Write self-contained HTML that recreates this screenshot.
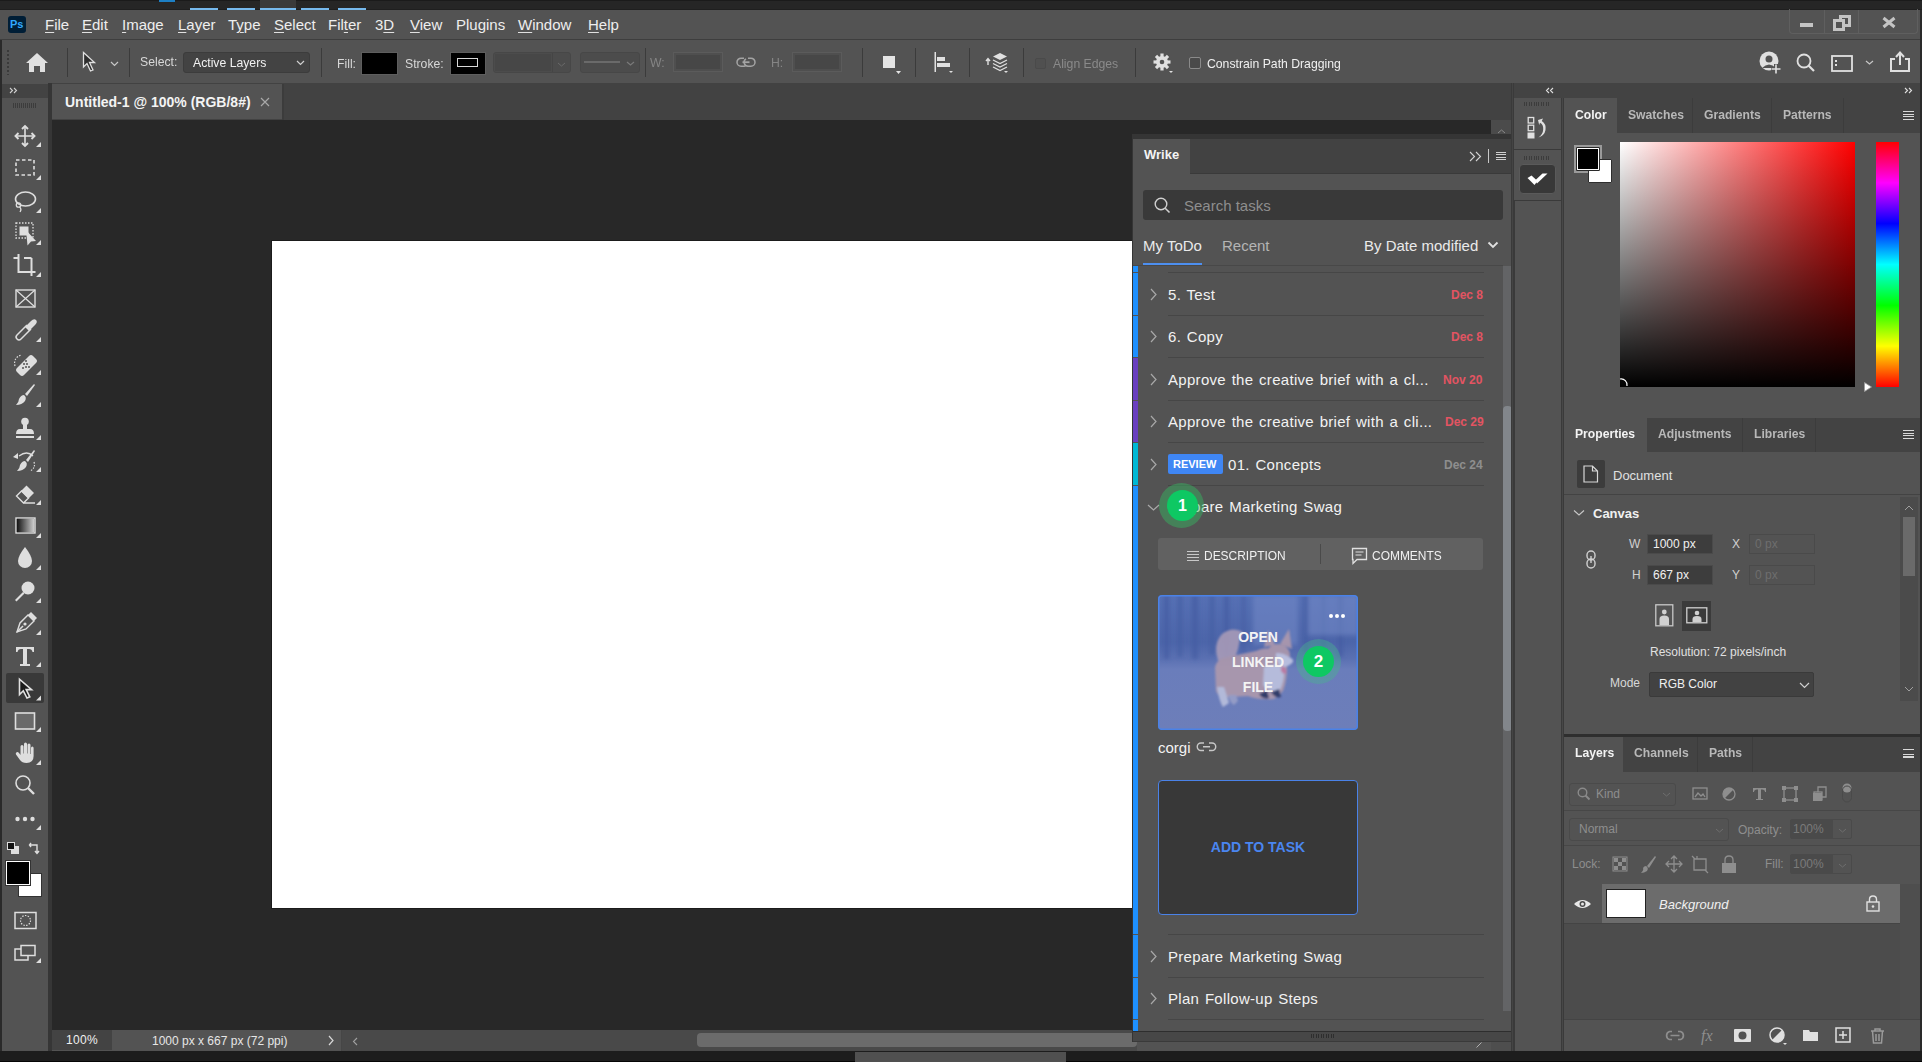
<!DOCTYPE html>
<html><head><meta charset="utf-8">
<style>
*{box-sizing:border-box;margin:0;padding:0}
html,body{width:1922px;height:1062px;overflow:hidden;background:#282828;font-family:"Liberation Sans",sans-serif;color:#e8e8e8}
.a{position:absolute}
.t{position:absolute;white-space:nowrap;line-height:1}
svg{position:absolute;overflow:visible}
.mi{position:absolute;top:17px;font-size:15px;color:#eeeeee;white-space:nowrap;line-height:1}
.mi u{text-decoration:underline;text-decoration-thickness:1px;text-underline-offset:2px;text-decoration-color:#e0e0e0}
.sep{position:absolute;width:1px;background:#3b3b3b}
.ob{position:absolute;font-size:13px;line-height:1;white-space:nowrap;transform:scaleX(0.94);transform-origin:0 0}
.inp{position:absolute;background:#474747;border:1px solid #5b5b5b;box-shadow:inset 0 0 0 2px #4f4f4f}
</style></head><body>
<!-- top strip -->
<div class="a" style="left:0;top:0;width:1922px;height:10px;background:#262626;border-top:1px solid #1b1b1b;border-bottom:1px solid #1f1f1f"></div>
<div class="a" style="left:190px;top:8px;width:28px;height:2px;background:#76b9ed"></div>
<div class="a" style="left:227px;top:8px;width:28px;height:2px;background:#76b9ed"></div>
<div class="a" style="left:260px;top:0;width:36px;height:8px;background:#3a3a3a"></div>
<div class="a" style="left:260px;top:8px;width:36px;height:2px;background:#76b9ed"></div>
<div class="a" style="left:301px;top:8px;width:28px;height:2px;background:#76b9ed"></div>
<div class="a" style="left:338px;top:8px;width:28px;height:2px;background:#76b9ed"></div>
<div class="a" style="left:159px;top:0;width:16px;height:2px;background:#1d7fc4"></div>
<!-- menu bar -->
<div class="a" style="left:0;top:10px;width:1922px;height:30px;background:#535353;border-bottom:1px solid #3e3e3e"></div>
<div class="a" style="left:8px;top:16px;width:18px;height:17px;background:#001e36;border-radius:3px"></div>
<div class="t" style="left:10px;top:19px;font-size:11px;font-weight:bold;color:#31a8ff">Ps</div>
<div class="mi" style="left:45px"><u>F</u>ile</div>
<div class="mi" style="left:82px"><u>E</u>dit</div>
<div class="mi" style="left:122px"><u>I</u>mage</div>
<div class="mi" style="left:178px"><u>L</u>ayer</div>
<div class="mi" style="left:228px">T<u>y</u>pe</div>
<div class="mi" style="left:274px"><u>S</u>elect</div>
<div class="mi" style="left:328px">Fil<u>t</u>er</div>
<div class="mi" style="left:375px">3<u>D</u></div>
<div class="mi" style="left:410px"><u>V</u>iew</div>
<div class="mi" style="left:456px">Plugins</div>
<div class="mi" style="left:518px"><u>W</u>indow</div>
<div class="mi" style="left:588px"><u>H</u>elp</div>
<!-- window controls -->
<div class="a" style="left:1789px;top:9px;width:129px;height:25px;border:1px solid #5f5f5f;border-top:none;border-radius:0 0 4px 4px"></div>
<div class="a" style="left:1824px;top:10px;width:1px;height:23px;background:#5f5f5f"></div>
<div class="a" style="left:1858px;top:10px;width:1px;height:23px;background:#5f5f5f"></div>
<div class="a" style="left:1800px;top:23px;width:13px;height:4px;background:#c4c4c4"></div>
<svg style="left:1833px;top:15px" width="19" height="16"><rect x="7.5" y="1.5" width="9" height="9" fill="none" stroke="#c4c4c4" stroke-width="3"/><rect x="1.5" y="5.5" width="9" height="9" fill="#535353" stroke="#c4c4c4" stroke-width="3"/></svg>
<svg style="left:1882px;top:17px" width="14" height="11"><path d="M1.5 1L12.5 10M12.5 1L1.5 10" stroke="#c4c4c4" stroke-width="3"/></svg>
<!-- options bar -->
<div class="a" style="left:0;top:40px;width:1922px;height:43px;background:#535353"></div>
<div class="a" style="left:0;top:40px;width:2px;height:1022px;background:#2a2a2a"></div>
<div class="a" style="left:7px;top:50px;width:2px;height:25px;background:repeating-linear-gradient(#3a3a3a 0 2px,transparent 2px 4px)"></div>
<svg style="left:26px;top:53px" width="22" height="19"><path d="M11 0L22 10H19V19H14V13H8V19H3V10H0Z" fill="#e0e0e0"/></svg>
<div class="sep" style="left:67px;top:48px;height:29px"></div>
<svg style="left:82px;top:51px" width="14" height="22"><path d="M1.5 1.5V16L5 12.5L8.5 20L11 19L7.5 11.5H12.5Z" fill="#2e2e2e" stroke="#e0e0e0" stroke-width="1.3"/></svg>
<svg style="left:110px;top:61px" width="9" height="6"><path d="M1 1L4.5 4.5L8 1" fill="none" stroke="#c8c8c8" stroke-width="1.2"/></svg>
<div class="sep" style="left:129px;top:48px;height:29px"></div>
<div class="ob" style="left:140px;top:55px;font-size:13px;color:#d8d8d8">Select:</div>
<div class="a" style="left:183px;top:52px;width:127px;height:21px;background:#434343;border:1px solid #3c3c3c;border-radius:3px"></div>
<div class="ob" style="left:193px;top:56px;font-size:13px;color:#f2f2f2">Active Layers</div>
<svg style="left:296px;top:60px" width="9" height="6"><path d="M1 1L4.5 4.5L8 1" fill="none" stroke="#d0d0d0" stroke-width="1.2"/></svg>
<div class="sep" style="left:321px;top:48px;height:29px"></div>
<div class="ob" style="left:337px;top:57px;color:#d8d8d8">Fill:</div>
<div class="a" style="left:361px;top:52px;width:37px;height:23px;background:#000;border:1px solid #5e5e5e"></div>
<div class="ob" style="left:405px;top:57px;color:#d8d8d8">Stroke:</div>
<div class="a" style="left:450px;top:52px;width:36px;height:23px;background:#000;border:1px solid #5e5e5e"></div>
<div class="a" style="left:457px;top:58px;width:21px;height:9px;border:1.5px solid #d8d8d8"></div>
<div class="a" style="left:493px;top:52px;width:78px;height:21px;background:#4c4c4c;border:1px solid #474747;border-radius:3px"></div>
<div class="a" style="left:495px;top:54px;width:56px;height:17px;background:#474747"></div>
<div class="a" style="left:552px;top:53px;width:1px;height:19px;background:#454545"></div>
<svg style="left:557px;top:62px" width="9" height="5"><path d="M1 1L4.5 4L8 1" fill="none" stroke="#6a6a6a" stroke-width="1"/></svg>
<div class="a" style="left:580px;top:52px;width:60px;height:21px;background:#4c4c4c;border:1px solid #474747;border-radius:3px"></div>
<div class="a" style="left:584px;top:61px;width:36px;height:2px;background:#6a6a6a"></div>
<svg style="left:626px;top:61px" width="9" height="5"><path d="M1 1L4.5 4L8 1" fill="none" stroke="#7a7a7a" stroke-width="1.2"/></svg>
<div class="sep" style="left:645px;top:48px;height:29px"></div>
<div class="ob" style="left:650px;top:56px;color:#858585">W:</div>
<div class="inp" style="left:673px;top:52px;width:50px;height:20px"></div>
<svg style="left:736px;top:57px" width="20" height="11"><path d="M8 1.2H5A4 4 0 0 0 5 9.2H8A4 4 0 0 0 10 8.6M12 1.2H15A4 4 0 0 1 15 9.2H12A4 4 0 0 1 10 1.8" fill="none" stroke="#a4a4a4" stroke-width="1.5"/><path d="M6.5 5.2H13.5" stroke="#a4a4a4" stroke-width="1.8"/></svg>
<div class="ob" style="left:771px;top:56px;color:#858585">H:</div>
<div class="inp" style="left:792px;top:52px;width:50px;height:20px"></div>
<div class="sep" style="left:862px;top:48px;height:29px"></div>
<div class="a" style="left:883px;top:56px;width:12px;height:12px;background:#e4e4e4"></div>
<svg style="left:896px;top:71px" width="5" height="3"><path d="M0 0H5L2.5 3Z" fill="#e4e4e4"/></svg>
<div class="sep" style="left:915px;top:48px;height:29px"></div>
<svg style="left:934px;top:52px" width="20" height="22"><rect x="0.5" y="0" width="1.5" height="20" fill="#e0e0e0"/><rect x="3" y="5" width="8" height="4" fill="#e0e0e0"/><rect x="3" y="11" width="13" height="4" fill="#e0e0e0"/><path d="M15 19H19L17 21Z" fill="#e0e0e0"/></svg>
<div class="sep" style="left:969px;top:48px;height:29px"></div>
<svg style="left:984px;top:52px" width="26" height="22"><path d="M4 13V7M2 9L4 6.5L6 9" fill="none" stroke="#e0e0e0" stroke-width="1.4"/><path d="M16 1L23 4.5L16 8L9 4.5Z" fill="#e0e0e0"/><path d="M9 8L16 11.5L23 8M9 11.5L16 15L23 11.5M9 15L16 18.5L23 15" fill="none" stroke="#e0e0e0" stroke-width="1.2"/><path d="M20 19H24L22 21Z" fill="#e0e0e0"/></svg>
<div class="sep" style="left:1023px;top:48px;height:29px"></div>
<div class="a" style="left:1035px;top:58px;width:11px;height:11px;border:1px solid #4a4a4a;border-radius:2px;background:#505050"></div>
<div class="ob" style="left:1053px;top:57px;color:#8a8a8a">Align Edges</div>
<div class="sep" style="left:1135px;top:48px;height:29px"></div>
<svg style="left:1153px;top:53px" width="20" height="20"><g transform="translate(9,9)"><circle r="6" fill="#e0e0e0"/><circle r="2.3" fill="#535353"/><g fill="#e0e0e0"><rect x="-1.6" y="-8.5" width="3.2" height="4"/><rect x="-1.6" y="4.5" width="3.2" height="4"/><rect x="-8.5" y="-1.6" width="4" height="3.2"/><rect x="4.5" y="-1.6" width="4" height="3.2"/><g transform="rotate(45)"><rect x="-1.6" y="-8.5" width="3.2" height="4"/><rect x="-1.6" y="4.5" width="3.2" height="4"/><rect x="-8.5" y="-1.6" width="4" height="3.2"/><rect x="4.5" y="-1.6" width="4" height="3.2"/></g></g></g><path d="M16 18H20L18 20Z" fill="#e0e0e0"/></svg>
<div class="a" style="left:1189px;top:57px;width:12px;height:12px;border:1px solid #8a8a8a;border-radius:2px;background:#4a4a4a"></div>
<div class="ob" style="left:1207px;top:57px;color:#f0f0f0">Constrain Path Dragging</div>
<svg style="left:1759px;top:51px" width="24" height="23"><circle cx="10" cy="10" r="9.5" fill="#e0e0e0"/><circle cx="10" cy="8" r="3.5" fill="#535353"/><path d="M3 17Q10 10 17 17" fill="#535353"/><path d="M17 13V23M12 18H22" stroke="#535353" stroke-width="4"/><path d="M17 13.5V22.5M12.5 18H21.5" stroke="#e0e0e0" stroke-width="1.6"/></svg>
<svg style="left:1796px;top:53px" width="20" height="20"><circle cx="8" cy="8" r="6.5" fill="none" stroke="#e0e0e0" stroke-width="1.8"/><path d="M12.5 12.5L18 18" stroke="#e0e0e0" stroke-width="2.2"/></svg>
<svg style="left:1831px;top:55px" width="22" height="17"><rect x="1" y="1" width="20" height="15" fill="none" stroke="#e0e0e0" stroke-width="1.8"/><rect x="4" y="5" width="2" height="2" fill="#e0e0e0"/><rect x="4" y="9" width="2" height="2" fill="#e0e0e0"/></svg>
<svg style="left:1865px;top:60px" width="9" height="5"><path d="M1 1L4.5 4L8 1" fill="none" stroke="#c8c8c8" stroke-width="1.2"/></svg>
<svg style="left:1889px;top:51px" width="22" height="21"><path d="M6 8H2V20H20V8H16" fill="none" stroke="#e0e0e0" stroke-width="2"/><path d="M11 14V2M7 6L11 1.5L15 6" fill="none" stroke="#e0e0e0" stroke-width="2"/></svg>
<!-- left toolbar -->
<div class="a" style="left:2px;top:83px;width:46px;height:968px;background:#535353"></div>
<div class="a" style="left:48px;top:83px;width:4px;height:968px;background:#363636"></div>
<div class="a" style="left:2px;top:84px;width:46px;height:14px;background:#434343"></div>
<svg style="left:9px;top:87px" width="9" height="7"><path d="M1 1L3.5 3.5L1 6M5 1L7.5 3.5L5 6" fill="none" stroke="#d0d0d0" stroke-width="1.1"/></svg>
<div class="a" style="left:13px;top:103px;width:24px;height:5px;background:repeating-linear-gradient(90deg,#3c3c3c 0 1px,transparent 1px 2px)"></div>
<svg style="left:0;top:0" width="50" height="1000"><g fill="none" stroke="#dedede" stroke-width="1.6">
<!-- move 135 -->
<path d="M25 127V145M16 136H34"/><path d="M22 129L25 126L28 129M22 143L25 146L28 143M18.5 133L15.5 136L18.5 139M31.5 133L34.5 136L31.5 139" stroke-width="1.9"/>
<!-- marquee 168 -->
<rect x="16" y="160" width="18" height="15" stroke-dasharray="3.5 2.5"/>
<!-- lasso 201 -->
<ellipse cx="25.5" cy="199" rx="10" ry="7"/><circle cx="18.5" cy="205" r="2.2" stroke-width="1.3"/><path d="M19.5 207Q22 209 20 212" stroke-width="1.3"/>
<!-- object select 233 -->
<rect x="16" y="223" width="17" height="15" stroke-dasharray="1.5 1.5" stroke-width="1.3"/>
<!-- crop 265 -->
<path d="M13.5 258H18.5M18.5 254V272H35.5M31.5 258V276M24 258H31.5M31.5 268" stroke-width="2"/>
<!-- frame 298 -->
<rect x="16" y="290" width="19" height="17" stroke-width="1.4"/><path d="M16 290L35 307M35 290L16 307" stroke-width="1.2"/>
<!-- eyedropper 330 -->
<path d="M17 339Q15 337 17 335L27 325M17 339Q19 341 21 339L31 329" stroke-width="1.5"/>
<!-- eraser 494 -->
<path d="M16.5 496L21.5 491L28.5 498L23.5 503Z M23.5 503H35" stroke-width="1.4"/>
<!-- gradient 526 -->
<rect x="16" y="518" width="19" height="15" stroke-width="1.4"/>
<!-- pen 624 -->
<path d="M17 632L20 623L28 615L34 621L26 629Z" stroke-width="1.4"/><path d="M17 632L23 626"/>
<!-- rectangle 721 -->
<rect x="15.5" y="713" width="19" height="16" fill="#6a6a6a" stroke-width="1.6"/>
<!-- zoom 786 -->
<circle cx="23" cy="783" r="7"/><path d="M28 788L34 794" stroke-width="2.4"/>
<!-- quick mask 920 -->
<rect x="15" y="912.5" width="21" height="16" stroke-width="1.5"/><circle cx="25.5" cy="920.5" r="5" stroke-dasharray="1.4 1.4" stroke-width="1.2"/>
<!-- screen mode 953 -->
<rect x="21" y="945.5" width="14" height="10" stroke-width="1.5"/><path d="M21 949H15V960H28V955.5" stroke-width="1.5"/>
<!-- swap 847 -->
<path d="M31 843L29.5 845L31 847M30 845H37V853M35 851L37 853.5L39 851" stroke-width="1.4"/>
</g>
<g fill="#dedede">
<!-- object select fill -->
<rect x="19.5" y="226.5" width="9" height="9"/><path d="M26 230L36 241L31 241.5L27.5 245.5Z"/>
<!-- eyedropper head -->
<path d="M25 327L31 321Q34 318 36 320Q38 322 35 325L29 331Z"/>
<!-- healing 363 -->
<path d="M17 368L29 356Q31 354 33 356L36 359Q38 361 36 363L24 375Q22 377 20 375L17 372Q15 370 17 368Z"/>
<!-- brush 395 -->
<path d="M35 385L27 396L25 394L34 384Z"/><path d="M24 395Q27 397 25 401Q22 405 16 405Q19 402 19 399Q21 395 24 395Z"/>
<!-- stamp 428 -->
<circle cx="25" cy="421.5" r="3.8"/><rect x="23" y="424" width="4" height="5"/><path d="M16 434Q16 429 20 429H30Q34 429 34 434Z"/><rect x="16" y="436" width="18" height="2"/>
<!-- history brush 461 -->
<path d="M35 451L28 462L26 460L34 450Z"/><path d="M25 461Q28 463 26 467Q23 471 17 471Q20 468 20 465Q22 461 25 461Z"/>
<path d="M13 457L18 453L18 459Z"/>
<!-- eraser top -->
<path d="M21 491L26.5 485.5L34 493L28.5 498.5Z"/>
<!-- blur 559 -->
<path d="M25 547Q32 556 32 561A7 7 0 0 1 18 561Q18 556 25 547Z"/>
<!-- dodge 591 -->
<circle cx="28" cy="588" r="6.5"/><path d="M15 600L23 592L24.5 593.5L16.5 601.5Z"/>
<!-- pen nib -->
<path d="M28 615L31 612L37 618L34 621Z"/>
<!-- type 656 -->
<path d="M16 647H34V652H32.5Q32 649 29 649H27V664H30V666H20V664H23V649H21Q18 649 17.5 652H16Z"/>
<!-- path select 688 -->
<!-- hand 753 -->
<path d="M20.5 755V746.5Q20.5 745 22 745Q23.5 745 23.5 746.5V753.5H24V744Q24 742.5 25.5 742.5Q27 742.5 27 744V753.5H27.5V745Q27.5 743.5 29 743.5Q30.5 743.5 30.5 745V754H31V748Q31 746.5 32.3 746.5Q33.6 746.5 33.6 748V756Q33.6 763 26.5 763Q22 763 20 760L16 754.5Q15.3 753 16.6 752.3Q17.8 751.7 19 753Z"/>
<!-- dots 818 -->
<circle cx="17.5" cy="819" r="2.2"/><circle cx="25" cy="819" r="2.2"/><circle cx="32.5" cy="819" r="2.2"/>
<!-- swap arrow heads -->
<!-- triangles -->
<path d="M41 142V147H36Z"/><path d="M41 175V180H36Z"/><path d="M41 208V213H36Z"/><path d="M41 240V245H36Z"/><path d="M41 272V277H36Z"/>
<path d="M41 337V342H36Z"/><path d="M41 370V375H36Z"/><path d="M41 402V407H36Z"/><path d="M41 435V440H36Z"/><path d="M41 467V472H36Z"/><path d="M41 500V505H36Z"/><path d="M41 533V538H36Z"/><path d="M41 565V570H36Z"/><path d="M41 598V603H36Z"/><path d="M41 630V635H36Z"/><path d="M41 662V667H36Z"/><path d="M41 695V700H36Z"/><path d="M41 727V732H36Z"/><path d="M41 760V765H36Z"/><path d="M41 825V830H36Z"/><path d="M41 958V963H36Z"/>
</g>
</svg>
<!-- healing dots/circle -->
<svg style="left:0;top:0" width="50" height="1000"><g fill="#535353"><circle cx="24" cy="364" r="1"/><circle cx="27" cy="364" r="1"/><circle cx="26" cy="367" r="1"/><circle cx="29" cy="367" r="1"/><circle cx="23" cy="368" r="1"/><circle cx="26" cy="361" r="1"/></g>
<path d="M15 366Q13 358 21 355" fill="none" stroke="#dedede" stroke-width="1.2" stroke-dasharray="1.5 1.5"/>
<!-- gradient fill -->
<defs><linearGradient id="tg" x1="0" x2="1"><stop offset="0" stop-color="#111"/><stop offset="1" stop-color="#cfcfcf"/></linearGradient></defs>
<rect x="16.8" y="518.8" width="17.4" height="13.4" fill="url(#tg)"/>
<!-- history dotted -->
<path d="M19 456Q27 450 33 456" fill="none" stroke="#dedede" stroke-width="1.3"/>
<path d="M34 462Q36 468 30 471" fill="none" stroke="#dedede" stroke-width="1.2" stroke-dasharray="1.4 1.4"/>
<!-- pen nib hole -->
<circle cx="25" cy="624" r="1.6" fill="#dedede"/>
</svg>
<div class="a" style="left:6px;top:673px;width:38px;height:30px;background:#393939;border-radius:2px"></div>
<svg style="left:18px;top:678px" width="24" height="24"><path d="M1.5 1.2V16.5L5.3 12.8L9 20L11.8 18.8L8.2 11.6H13.6Z" fill="#1a1a1a" stroke="#e0e0e0" stroke-width="1.6" stroke-linejoin="miter"/><path d="M23 17.5V22.5H18Z" fill="#dedede"/></svg>
<!-- fg/bg -->
<div class="a" style="left:7px;top:842px;width:8px;height:8px;background:#111;border:1px solid #dedede"></div>
<div class="a" style="left:11px;top:846px;width:8px;height:8px;background:#dedede"></div>
<div class="a" style="left:7px;top:842px;width:8px;height:8px;background:#111;border:1px solid #dedede"></div>
<div class="a" style="left:18px;top:873px;width:24px;height:24px;background:#fff;border:1px solid #333"></div>
<div class="a" style="left:6px;top:861px;width:24px;height:24px;background:#000;border:1.5px solid #fff;box-shadow:0 0 0 1px #333"></div>
<!-- tab bar -->
<div class="a" style="left:52px;top:83px;width:1459px;height:37px;background:#424242"></div>
<div class="a" style="left:52px;top:84px;width:230px;height:35px;background:#535353"></div>
<div class="a" style="left:282px;top:84px;width:2px;height:36px;background:#3c3c3c"></div>
<div class="t" style="left:65px;top:95px;font-size:14px;font-weight:bold;color:#f4f4f4">Untitled-1 @ 100% (RGB/8#)</div>
<svg style="left:260px;top:97px" width="10" height="10"><path d="M1 1L9 9M9 1L1 9" stroke="#a8a8a8" stroke-width="1.2"/></svg>
<!-- canvas -->
<div class="a" style="left:52px;top:120px;width:1439px;height:909px;background:#282828"></div>
<div class="a" style="left:1491px;top:120px;width:20px;height:910px;background:#4b4b4b"></div>
<svg style="left:1497px;top:129px" width="9" height="5"><path d="M1 4L4.5 1L8 4" fill="none" stroke="#8a8a8a" stroke-width="1"/></svg>
<div class="a" style="left:272px;top:241px;width:870px;height:667px;background:#ffffff;box-shadow:0 0 0 1px #1b1b1b"></div>
<!-- status bar -->
<div class="a" style="left:52px;top:1030px;width:1459px;height:21px;background:#535353"></div>
<div class="a" style="left:52px;top:1030px;width:60px;height:20px;background:#434343"></div>
<div class="t" style="left:66px;top:1034px;font-size:12px;letter-spacing:0.3px;color:#f0f0f0">100%</div>
<div class="t" style="left:152px;top:1035px;font-size:12px;color:#e6e6e6">1000 px x 667 px (72 ppi)</div>
<svg style="left:328px;top:1035px" width="6" height="11"><path d="M1 1L5 5.5L1 10" fill="none" stroke="#d8d8d8" stroke-width="1.2"/></svg>
<div class="a" style="left:341px;top:1030px;width:1px;height:21px;background:#464646"></div>
<div class="a" style="left:342px;top:1030px;width:1169px;height:21px;background:#494949"></div>
<svg style="left:352px;top:1037px" width="6" height="9"><path d="M5 1L1.5 4.5L5 8" fill="none" stroke="#a0a0a0" stroke-width="1.1"/></svg>
<div class="a" style="left:697px;top:1033px;width:440px;height:14px;background:#6b6b6b;border-radius:4px"></div>
<!-- bottom strip -->
<div class="a" style="left:0;top:1051px;width:1922px;height:11px;background:#1d1d1d;border-bottom:1px solid #050505"></div>
<div class="a" style="left:855px;top:1052px;width:211px;height:10px;background:#505050"></div>
<!-- WRIKE PANEL -->
<div class="a" style="left:1132px;top:134px;width:380px;height:908px;background:#353535"></div>
<div class="a" style="left:1133px;top:139px;width:378px;height:35px;background:#424242"></div>
<div class="a" style="left:1133px;top:139px;width:57px;height:35px;background:#535353"></div>
<div class="t" style="left:1144px;top:148px;font-size:13px;font-weight:bold;color:#f4f4f4">Wrike</div>
<svg style="left:1469px;top:151px" width="16" height="11"><path d="M1 1L5.5 5.5L1 10M7 1L11.5 5.5L7 10" fill="none" stroke="#d4d4d4" stroke-width="1.1"/></svg>
<div class="a" style="left:1488px;top:149px;width:1px;height:14px;background:#c8c8c8"></div>
<div class="a" style="left:1496px;top:152px;width:10px;height:8px;background:repeating-linear-gradient(#d0d0d0 0 1px,transparent 1px 2.4px)"></div>
<div class="a" style="left:1133px;top:174px;width:378px;height:857px;background:#535353"></div>
<div class="a" style="left:1190px;top:173px;width:321px;height:1px;background:#3a3a3a"></div>
<!-- search -->
<div class="a" style="left:1143px;top:190px;width:360px;height:30px;background:#393939;border-radius:3px"></div>
<svg style="left:1154px;top:197px" width="17" height="17"><circle cx="7" cy="7" r="5.8" fill="none" stroke="#d0d0d0" stroke-width="1.4"/><path d="M11.2 11.2L15.5 15.5" stroke="#d0d0d0" stroke-width="1.6"/></svg>
<div class="t" style="left:1184px;top:198px;font-size:15px;color:#8e8e8e">Search tasks</div>
<!-- tabs -->
<div class="t" style="left:1143px;top:238px;font-size:15px;color:#eaeaea">My ToDo</div>
<div class="t" style="left:1222px;top:238px;font-size:15px;color:#b4b4b4">Recent</div>
<div class="t" style="left:1364px;top:238px;font-size:15px;color:#eaeaea">By Date modified</div>
<svg style="left:1487px;top:241px" width="12" height="8"><path d="M1.5 1.5L6 6L10.5 1.5" fill="none" stroke="#e0e0e0" stroke-width="1.8"/></svg>
<div class="a" style="left:1143px;top:263px;width:59px;height:2px;background:#4d8ff0"></div>
<div class="a" style="left:1133px;top:265px;width:370px;height:1px;background:#484848"></div>
<!-- color bar -->
<div class="a" style="left:1133px;top:266px;width:5px;height:6px;background:#1e90ff"></div>
<div class="a" style="left:1133px;top:273px;width:5px;height:42px;background:#1e90ff"></div>
<div class="a" style="left:1133px;top:316px;width:5px;height:41px;background:#1e90ff"></div>
<div class="a" style="left:1133px;top:358px;width:5px;height:42px;background:#6a3fc0"></div>
<div class="a" style="left:1133px;top:401px;width:5px;height:41px;background:#6a3fc0"></div>
<div class="a" style="left:1133px;top:443px;width:5px;height:42px;background:#00b8d4"></div>
<div class="a" style="left:1133px;top:486px;width:5px;height:448px;background:#1e90ff"></div>
<div class="a" style="left:1133px;top:935px;width:5px;height:42px;background:#1e90ff"></div>
<div class="a" style="left:1133px;top:978px;width:5px;height:41px;background:#1e90ff"></div>
<div class="a" style="left:1133px;top:1020px;width:5px;height:11px;background:#1e90ff"></div>
<!-- dividers -->
<div class="a" style="left:1168px;top:272px;width:316px;height:1px;background:#464646"></div>
<div class="a" style="left:1168px;top:315px;width:316px;height:1px;background:#464646"></div>
<div class="a" style="left:1168px;top:357px;width:316px;height:1px;background:#464646"></div>
<div class="a" style="left:1168px;top:400px;width:316px;height:1px;background:#464646"></div>
<div class="a" style="left:1168px;top:442px;width:316px;height:1px;background:#464646"></div>
<div class="a" style="left:1168px;top:485px;width:316px;height:1px;background:#464646"></div>
<div class="a" style="left:1168px;top:934px;width:316px;height:1px;background:#464646"></div>
<div class="a" style="left:1168px;top:977px;width:316px;height:1px;background:#464646"></div>
<div class="a" style="left:1168px;top:1019px;width:316px;height:1px;background:#464646"></div>
<!-- chevrons -->
<svg style="left:0;top:0" width="1922" height="1062"><g fill="none" stroke="#a8a8a8" stroke-width="1.2">
<path d="M1151 289L1156 294.5L1151 300"/><path d="M1151 331L1156 336.5L1151 342"/><path d="M1151 374L1156 379.5L1151 385"/><path d="M1151 416L1156 421.5L1151 427"/><path d="M1151 459L1156 464.5L1151 470"/>
<path d="M1148 505L1153.5 510L1159 505"/>
<path d="M1151 951L1156 956.5L1151 962"/><path d="M1151 993L1156 998.5L1151 1004"/>
</g></svg>
<!-- rows -->
<div class="t" style="left:1168px;top:287px;font-size:15px;word-spacing:1.2px;letter-spacing:0.3px;color:#f2f2f2">5. Test</div>
<div class="t" style="left:1451px;top:289px;font-size:12px;font-weight:bold;color:#e35462">Dec 8</div>
<div class="t" style="left:1168px;top:329px;font-size:15px;word-spacing:1.2px;letter-spacing:0.3px;color:#f2f2f2">6. Copy</div>
<div class="t" style="left:1451px;top:331px;font-size:12px;font-weight:bold;color:#e35462">Dec 8</div>
<div class="t" style="left:1168px;top:372px;font-size:15px;word-spacing:1.2px;letter-spacing:0.3px;color:#f2f2f2">Approve the creative brief with a cl...</div>
<div class="t" style="left:1443px;top:374px;font-size:12px;font-weight:bold;color:#e35462">Nov 20</div>
<div class="t" style="left:1168px;top:414px;font-size:15px;word-spacing:1.2px;letter-spacing:0.3px;color:#f2f2f2">Approve the creative brief with a cli...</div>
<div class="t" style="left:1445px;top:416px;font-size:12px;font-weight:bold;color:#e35462">Dec 29</div>
<div class="a" style="left:1168px;top:454px;width:55px;height:20px;background:#3f86f4;border-radius:2px"></div>
<div class="t" style="left:1173px;top:459px;font-size:11px;font-weight:bold;color:#ffffff">REVIEW</div>
<div class="t" style="left:1228px;top:457px;font-size:15px;word-spacing:1.2px;letter-spacing:0.3px;color:#f2f2f2">01. Concepts</div>
<div class="t" style="left:1444px;top:459px;font-size:12px;font-weight:bold;color:#8e8e8e">Dec 24</div>
<div class="t" style="left:1168px;top:499px;font-size:15px;word-spacing:1.2px;letter-spacing:0.3px;color:#f2f2f2">Prepare Marketing Swag</div>
<!-- badge 1 -->
<div class="a" style="left:1159px;top:483px;width:45px;height:45px;border-radius:50%;background:rgba(50,200,100,0.4)"></div>
<div class="a" style="left:1167px;top:490px;width:31px;height:31px;border-radius:50%;background:#0ec863"></div>
<div class="t" style="left:1178px;top:498px;font-size:16px;font-weight:bold;color:#ffffff">1</div>
<!-- desc/comments -->
<div class="a" style="left:1158px;top:538px;width:325px;height:32px;background:#616161;border-radius:3px"></div>
<div class="a" style="left:1320px;top:544px;width:1px;height:20px;background:#4a4a4a"></div>
<div class="a" style="left:1187px;top:551px;width:12px;height:12px;background:repeating-linear-gradient(#c8c8c8 0 1.3px,transparent 1.3px 3px)"></div>
<div class="t" style="left:1204px;top:549px;font-size:13px;color:#f0f0f0;transform:scaleX(0.92);transform-origin:0 0">DESCRIPTION</div>
<svg style="left:1351px;top:547px" width="17" height="19"><path d="M1.5 1.5H15.5V12.5H6L2 16.5V12.5H1.5Z" fill="none" stroke="#e0e0e0" stroke-width="1.3"/><path d="M4.5 5H12.5M4.5 8H10.5" stroke="#e0e0e0" stroke-width="1.2"/></svg>
<div class="t" style="left:1372px;top:549px;font-size:13px;color:#f0f0f0;transform:scaleX(0.92);transform-origin:0 0">COMMENTS</div>
<!-- image card -->
<svg style="left:1158px;top:595px" width="200" height="135" viewBox="0 0 200 135">
<defs>
<linearGradient id="wsky" x1="0" y1="0" x2="0" y2="1"><stop offset="0" stop-color="#5670b4"/><stop offset="0.35" stop-color="#4c65a9"/><stop offset="0.47" stop-color="#5a70b2"/><stop offset="0.55" stop-color="#6a7dbb"/><stop offset="1" stop-color="#6d7eb9"/></linearGradient>
<clipPath id="wc"><rect x="0.5" y="0.5" width="199" height="134" rx="3"/></clipPath>
<filter id="wb" x="-10%" y="-10%" width="120%" height="120%"><feGaussianBlur stdDeviation="2"/></filter>
<filter id="wb2" x="-10%" y="-10%" width="120%" height="120%"><feGaussianBlur stdDeviation="1.2"/></filter>
</defs>
<g clip-path="url(#wc)">
<rect width="200" height="135" fill="url(#wsky)"/>
<g filter="url(#wb)">
<g fill="#445da3" opacity="0.8"><rect x="6" y="0" width="5" height="64"/><rect x="20" y="0" width="4" height="62"/><rect x="34" y="0" width="6" height="64"/><rect x="52" y="0" width="4" height="60"/><rect x="66" y="0" width="5" height="62"/><rect x="84" y="0" width="3" height="58"/><rect x="146" y="0" width="4" height="58"/><rect x="164" y="0" width="3" height="60"/><rect x="180" y="0" width="5" height="62"/></g>
<g fill="#7389c6" opacity="0.55"><rect x="95" y="0" width="45" height="50"/><rect x="150" y="0" width="50" height="40"/></g>
</g>
<g filter="url(#wb2)" opacity="0.88">
<path d="M61 68Q54 50 64 39Q74 31 85 37Q81 45 80 54Q78 62 74 68Z" fill="#aa9cb8"/>
<path d="M57 72Q59 63 70 62L98 56Q106 52 112 54L128 60Q131 80 125 96L116 104Q100 105 90 101L72 102Q61 104 58 96Z" fill="#b09aac"/>
<path d="M106 52L110 35L117 50Z" fill="#b09aac"/><path d="M122 49L131 34L134 54Z" fill="#b09aac"/>
<ellipse cx="120" cy="60" rx="12" ry="11" fill="#b09aac"/>
<path d="M118 58Q126 58 131 62Q136 64 135 67Q131 72 124 72Q117 68 118 58Z" fill="#c4c8e4"/>
<path d="M106 72Q116 68 126 72Q127 86 121 97Q110 97 105 90Z" fill="#c0c4e0"/>
<path d="M125 71Q130 75 128 79Q122 79 123 72Z" fill="#c47aa0"/>
<path d="M113 97Q117 104 123 102L121 94Z" fill="#2a3460"/>
<path d="M101 99Q105 105 111 103L109 95Z" fill="#2a3460"/>
<path d="M59 92Q61 106 65 112L71 108Q68 98 66 92Z" fill="#bcc2de"/>
<path d="M70 100Q72 108 76 110L80 106L78 100Z" fill="#9aa0c8"/>
</g>
</g>
<rect x="0.75" y="0.75" width="198.5" height="133.5" rx="3" fill="none" stroke="#4a82e8" stroke-width="1.5"/>
</svg>
<div class="a" style="left:1329px;top:614px;width:4px;height:4px;border-radius:50%;background:#fff"></div>
<div class="a" style="left:1335px;top:614px;width:4px;height:4px;border-radius:50%;background:#fff"></div>
<div class="a" style="left:1341px;top:614px;width:4px;height:4px;border-radius:50%;background:#fff"></div>
<div class="t" style="left:1208px;top:630px;width:100px;text-align:center;font-size:14px;font-weight:bold;color:#f4f4f4">OPEN</div>
<div class="t" style="left:1208px;top:655px;width:100px;text-align:center;font-size:14px;font-weight:bold;color:#f4f4f4">LINKED</div>
<div class="t" style="left:1208px;top:680px;width:100px;text-align:center;font-size:14px;font-weight:bold;color:#f4f4f4">FILE</div>
<div class="a" style="left:1296px;top:639px;width:45px;height:45px;border-radius:50%;background:rgba(70,185,140,0.38)"></div>
<div class="a" style="left:1303px;top:646px;width:31px;height:31px;border-radius:50%;background:#0ec863"></div>
<div class="t" style="left:1303px;top:653px;width:31px;text-align:center;font-size:17px;font-weight:bold;color:#ffffff">2</div>
<div class="t" style="left:1158px;top:740px;font-size:15px;color:#f2f2f2">corgi</div>
<svg style="left:1197px;top:742px" width="20" height="10"><path d="M7 1H4A3.5 3.5 0 0 0 4 8.5H7M12 1H15A3.5 3.5 0 0 1 15 8.5H12M6 4.75H13" fill="none" stroke="#c8c8c8" stroke-width="1.4"/></svg>
<!-- add to task -->
<div class="a" style="left:1158px;top:780px;width:200px;height:135px;background:#383838;border:1.5px solid #4a82e8;border-radius:4px"></div>
<div class="t" style="left:1158px;top:840px;width:200px;text-align:center;font-size:14px;font-weight:bold;color:#4a86f0">ADD TO TASK</div>
<div class="t" style="left:1168px;top:949px;font-size:15px;word-spacing:1.2px;letter-spacing:0.3px;color:#f2f2f2">Prepare Marketing Swag</div>
<div class="t" style="left:1168px;top:991px;font-size:15px;word-spacing:1.2px;letter-spacing:0.3px;color:#f2f2f2">Plan Follow-up Steps</div>
<!-- scrollbar -->
<div class="a" style="left:1503px;top:266px;width:9px;height:745px;background:#636466"></div>
<div class="a" style="left:1503px;top:406px;width:9px;height:325px;background:#82868b;border-radius:4px"></div>
<!-- footer -->
<div class="a" style="left:1137px;top:1041px;width:375px;height:10px;background:#535353"></div>
<div class="a" style="left:1491px;top:1042px;width:20px;height:9px;background:#4e4e4e"></div>
<svg style="left:1476px;top:1042px" width="6" height="6"><path d="M0.5 5.5L5.5 0.5" stroke="#b0b0b0" stroke-width="1"/></svg>
<div class="a" style="left:1133px;top:1031px;width:378px;height:11px;background:#474747;border-top:1px solid #2e2e2e;border-bottom:1px solid #3a3a3a"></div>
<div class="a" style="left:1311px;top:1034px;width:25px;height:4px;background:repeating-linear-gradient(90deg,#2e2e2e 0 1px,transparent 1px 2.5px)"></div>
<!-- RIGHT DOCK -->
<div class="a" style="left:1511px;top:83px;width:411px;height:968px;background:#3a3a3a"></div>
<div class="a" style="left:1512px;top:83px;width:1px;height:968px;background:#444444"></div>
<div class="a" style="left:1514px;top:83px;width:408px;height:15px;background:#434343"></div>
<svg style="left:1545px;top:87px" width="9" height="7"><path d="M4 1L1.5 3.5L4 6M8 1L5.5 3.5L8 6" fill="none" stroke="#e0e0e0" stroke-width="1.1"/></svg>
<svg style="left:1904px;top:87px" width="9" height="7"><path d="M1 1L3.5 3.5L1 6M5 1L7.5 3.5L5 6" fill="none" stroke="#e0e0e0" stroke-width="1.1"/></svg>
<!-- icon column -->
<div class="a" style="left:1514px;top:98px;width:47px;height:51px;background:#535353"></div>
<div class="a" style="left:1524px;top:102px;width:25px;height:4px;background:repeating-linear-gradient(90deg,#3c3c3c 0 1px,transparent 1px 2.4px)"></div>
<svg style="left:1527px;top:116px" width="22" height="24"><g fill="none" stroke="#e0e0e0" stroke-width="1.3"><rect x="1.2" y="1.5" width="5.5" height="5.5"/><rect x="1.2" y="9.2" width="5.5" height="5.5"/></g><rect x="0.5" y="16.5" width="7" height="6" fill="#e0e0e0"/><path d="M11 4L16 2.5L14.8 5Q19.5 8 18.5 14Q17.5 19.5 11.5 21.5Q16 18 16.2 13.5Q16.5 8.5 13 6.8L12.2 9Z" fill="#e0e0e0"/></svg>
<div class="a" style="left:1514px;top:150px;width:47px;height:50px;background:#535353"></div>
<div class="a" style="left:1524px;top:156px;width:25px;height:4px;background:repeating-linear-gradient(90deg,#3c3c3c 0 1px,transparent 1px 2.4px)"></div>
<div class="a" style="left:1519px;top:164px;width:37px;height:30px;background:#383838;border:1px solid #5a5a5a;border-radius:4px"></div>
<svg style="left:1526px;top:171px" width="23" height="16"><path d="M1.5 7L5.5 4.5L11.5 10L8.5 14Z" fill="#ffffff"/><path d="M9 9.5L16.5 2.5H21.5L11 12.5Z" fill="#ffffff"/></svg>
<div class="a" style="left:1515px;top:201px;width:46px;height:850px;background:#535353"></div>
<div class="a" style="left:1562px;top:98px;width:1px;height:953px;background:#474747"></div>
<!-- COLOR PANEL -->
<div class="a" style="left:1564px;top:98px;width:358px;height:35px;background:#434343"></div>
<div class="a" style="left:1564px;top:98px;width:53px;height:35px;background:#535353"></div>
<div class="a" style="left:1692px;top:98px;width:1px;height:35px;background:#3c3c3c"></div>
<div class="a" style="left:1771px;top:98px;width:1px;height:35px;background:#3c3c3c"></div>
<div class="a" style="left:1843px;top:98px;width:1px;height:35px;background:#3c3c3c"></div>
<div class="t" style="left:1575px;top:107.5px;font-size:13.5px;font-weight:bold;color:#f4f4f4;transform:scaleX(0.9);transform-origin:0 0">Color</div>
<div class="t" style="left:1628px;top:107.5px;font-size:13.5px;font-weight:bold;color:#b8b8b8;transform:scaleX(0.9);transform-origin:0 0">Swatches</div>
<div class="t" style="left:1704px;top:107.5px;font-size:13.5px;font-weight:bold;color:#b8b8b8;transform:scaleX(0.9);transform-origin:0 0">Gradients</div>
<div class="t" style="left:1783px;top:107.5px;font-size:13.5px;font-weight:bold;color:#b8b8b8;transform:scaleX(0.9);transform-origin:0 0">Patterns</div>
<div class="a" style="left:1903px;top:111px;width:11px;height:9px;background:repeating-linear-gradient(#d8d8d8 0 1px,transparent 1px 2.5px)"></div>
<div class="a" style="left:1564px;top:133px;width:358px;height:285px;background:#535353"></div>
<div class="a" style="left:1574px;top:145px;width:28px;height:28px;background:#9a9a9a"></div>
<div class="a" style="left:1588px;top:159px;width:24px;height:24px;background:#fff;border:1px solid #2e2e2e;border-radius:1px"></div>
<div class="a" style="left:1576px;top:147px;width:24px;height:24px;background:#000;border:1px solid #2a2a2a;box-shadow:inset 0 0 0 1px #fff;border-radius:1px"></div>
<div class="a" style="left:1620px;top:142px;width:235px;height:245px;background:linear-gradient(to bottom,rgba(0,0,0,0),#000),linear-gradient(to right,#fff,#f00)"></div>
<svg style="left:1619px;top:377px" width="10" height="10"><path d="M1 2A6 6 0 0 1 8 9" fill="none" stroke="#fff" stroke-width="1.2"/></svg>
<div class="a" style="left:1876px;top:142px;width:23px;height:245px;background:linear-gradient(to bottom,#f00 0%,#f0f 16.7%,#00f 33.3%,#0ff 50%,#0f0 66.7%,#ff0 83.3%,#f00 100%)"></div>
<svg style="left:1863px;top:381px" width="10" height="12"><path d="M1.5 1.5V10.5L8.5 6Z" fill="#ffffff" stroke="#9a9a9a" stroke-width="0.8"/></svg>
<div class="a" style="left:1564px;top:418px;width:358px;height:1px;background:#2e2e2e"></div>
<!-- PROPERTIES -->
<div class="a" style="left:1564px;top:418px;width:358px;height:34px;background:#434343"></div>
<div class="a" style="left:1564px;top:418px;width:83px;height:34px;background:#535353"></div>
<div class="a" style="left:1742px;top:418px;width:1px;height:34px;background:#3c3c3c"></div>
<div class="a" style="left:1815px;top:418px;width:1px;height:34px;background:#3c3c3c"></div>
<div class="t" style="left:1575px;top:426.5px;font-size:13.5px;font-weight:bold;color:#f4f4f4;transform:scaleX(0.9);transform-origin:0 0">Properties</div>
<div class="t" style="left:1658px;top:426.5px;font-size:13.5px;font-weight:bold;color:#b8b8b8;transform:scaleX(0.9);transform-origin:0 0">Adjustments</div>
<div class="t" style="left:1754px;top:426.5px;font-size:13.5px;font-weight:bold;color:#b8b8b8;transform:scaleX(0.9);transform-origin:0 0">Libraries</div>
<div class="a" style="left:1903px;top:430px;width:11px;height:9px;background:repeating-linear-gradient(#d8d8d8 0 1px,transparent 1px 2.5px)"></div>
<div class="a" style="left:1564px;top:452px;width:358px;height:282px;background:#535353"></div>
<div class="a" style="left:1577px;top:460px;width:28px;height:28px;background:#3c3c3c;border-radius:2px"></div>
<svg style="left:1583px;top:465px" width="16" height="18"><path d="M1 1H9.5L14.5 6V17H1Z M9.5 1V6H14.5" fill="none" stroke="#d8d8d8" stroke-width="1.2"/></svg>
<div class="t" style="left:1613px;top:469px;font-size:13px;color:#e0e0e0">Document</div>
<div class="a" style="left:1564px;top:494px;width:358px;height:1px;background:#434343"></div>
<svg style="left:1573px;top:509px" width="12" height="8"><path d="M1 1.5L6 6L11 1.5" fill="none" stroke="#c8c8c8" stroke-width="1.1"/></svg>
<div class="t" style="left:1593px;top:507px;font-size:13px;font-weight:bold;color:#f0f0f0">Canvas</div>
<div class="t" style="left:1629px;top:538px;font-size:12px;color:#d0d0d0">W</div>
<div class="a" style="left:1647px;top:534px;width:66px;height:20px;background:#3d3d3d;border:1px solid #4a4a4a"></div>
<div class="t" style="left:1653px;top:538px;font-size:12px;color:#f0f0f0">1000 px</div>
<div class="t" style="left:1632px;top:569px;font-size:12px;color:#d0d0d0">H</div>
<div class="a" style="left:1647px;top:565px;width:66px;height:20px;background:#3d3d3d;border:1px solid #4a4a4a"></div>
<div class="t" style="left:1653px;top:569px;font-size:12px;color:#f0f0f0">667 px</div>
<div class="t" style="left:1732px;top:538px;font-size:12px;color:#d0d0d0">X</div>
<div class="a" style="left:1749px;top:534px;width:66px;height:20px;background:#535353;border:1px solid #4a4a4a"></div>
<div class="t" style="left:1755px;top:538px;font-size:12px;color:#6e6e6e">0 px</div>
<div class="t" style="left:1732px;top:569px;font-size:12px;color:#d0d0d0">Y</div>
<div class="a" style="left:1749px;top:565px;width:66px;height:20px;background:#535353;border:1px solid #4a4a4a"></div>
<div class="t" style="left:1755px;top:569px;font-size:12px;color:#6e6e6e">0 px</div>
<svg style="left:1586px;top:550px" width="12" height="20"><rect x="1" y="1" width="8" height="9" rx="4" fill="none" stroke="#d0d0d0" stroke-width="1.4"/><rect x="1" y="9" width="8" height="9" rx="4" fill="none" stroke="#d0d0d0" stroke-width="1.4"/><path d="M5 6V13" stroke="#d0d0d0" stroke-width="1.4"/></svg>
<svg style="left:1655px;top:604px" width="20" height="24"><rect x="0.8" y="0.8" width="17" height="21" fill="none" stroke="#c8c8c8" stroke-width="1.3"/><circle cx="9.3" cy="8" r="2.4" fill="#d0d0d0"/><path d="M4.5 21V15Q4.5 11.5 9.3 11.5Q14 11.5 14 15V21Z" fill="#d0d0d0"/></svg>
<div class="a" style="left:1682px;top:601px;width:29px;height:30px;background:#3b3b3b"></div>
<svg style="left:1686px;top:607px" width="22" height="17"><rect x="0.8" y="0.8" width="20" height="15" fill="none" stroke="#d0d0d0" stroke-width="1.3"/><circle cx="11" cy="6" r="2.3" fill="#d0d0d0"/><path d="M6.5 15V12Q6.5 9 11 9Q15.5 9 15.5 12V15Z" fill="#d0d0d0"/></svg>
<div class="t" style="left:1650px;top:646px;font-size:12px;color:#e0e0e0">Resolution: 72 pixels/inch</div>
<div class="t" style="left:1610px;top:677px;font-size:12px;color:#d8d8d8">Mode</div>
<div class="a" style="left:1649px;top:672px;width:165px;height:25px;background:#424242;border:1px solid #3a3a3a;border-radius:2px"></div>
<div class="t" style="left:1659px;top:678px;font-size:12px;color:#f0f0f0">RGB Color</div>
<svg style="left:1799px;top:682px" width="11" height="7"><path d="M1 1L5.5 5.5L10 1" fill="none" stroke="#d0d0d0" stroke-width="1.2"/></svg>
<div class="a" style="left:1900px;top:497px;width:18px;height:204px;background:#4b4b4b"></div>
<div class="a" style="left:1903px;top:517px;width:12px;height:59px;background:#6a6a6a"></div>
<svg style="left:1904px;top:505px" width="10" height="6"><path d="M1 5L5 1L9 5" fill="none" stroke="#a0a0a0" stroke-width="1"/></svg>
<svg style="left:1904px;top:686px" width="10" height="6"><path d="M1 1L5 5L9 1" fill="none" stroke="#a0a0a0" stroke-width="1"/></svg>
<!-- LAYERS -->
<div class="a" style="left:1564px;top:734px;width:358px;height:3px;background:#2e2e2e"></div>
<div class="a" style="left:1564px;top:737px;width:358px;height:35px;background:#434343"></div>
<div class="a" style="left:1564px;top:737px;width:59px;height:35px;background:#535353"></div>
<div class="a" style="left:1697px;top:737px;width:1px;height:35px;background:#3c3c3c"></div>
<div class="a" style="left:1752px;top:737px;width:1px;height:35px;background:#3c3c3c"></div>
<div class="t" style="left:1575px;top:745.5px;font-size:13.5px;font-weight:bold;color:#f4f4f4;transform:scaleX(0.9);transform-origin:0 0">Layers</div>
<div class="t" style="left:1634px;top:745.5px;font-size:13.5px;font-weight:bold;color:#b8b8b8;transform:scaleX(0.9);transform-origin:0 0">Channels</div>
<div class="t" style="left:1709px;top:745.5px;font-size:13.5px;font-weight:bold;color:#b8b8b8;transform:scaleX(0.9);transform-origin:0 0">Paths</div>
<div class="a" style="left:1903px;top:749px;width:11px;height:9px;background:repeating-linear-gradient(#d8d8d8 0 1px,transparent 1px 2.5px)"></div>
<div class="a" style="left:1564px;top:772px;width:358px;height:278px;background:#535353"></div>
<div class="a" style="left:1569px;top:783px;width:107px;height:23px;background:#535353;border:1px solid #4a4a4a;border-radius:3px"></div>
<svg style="left:1577px;top:787px" width="14" height="14"><circle cx="5.5" cy="5.5" r="4.3" fill="none" stroke="#8a8a8a" stroke-width="1.4"/><path d="M8.5 8.5L12.5 12.5" stroke="#8a8a8a" stroke-width="1.8"/></svg>
<div class="t" style="left:1596px;top:788px;font-size:12px;color:#8e8e8e">Kind</div>
<svg style="left:1662px;top:792px" width="9" height="5"><path d="M1 1L4.5 4L8 1" fill="none" stroke="#6e6e6e" stroke-width="1"/></svg>
<svg style="left:0;top:0" width="1922" height="1062"><g fill="none" stroke="#8e8e8e" stroke-width="1.3">
<rect x="1693" y="788" width="14" height="11"/><path d="M1695 797L1698 793L1701 796L1703 794L1705 797"/>
<circle cx="1729" cy="794" r="6"/>
<rect x="1784" y="788" width="12" height="12"/>
<rect x="1814" y="792" width="8" height="8"/><path d="M1818 792V787H1826V797H1822"/>
</g><g fill="#8e8e8e"><path d="M1729 788A6 6 0 0 0 1729 800Z" transform="rotate(45 1729 794)"/>
<path d="M1753 788H1766V792H1765Q1765 789.5 1762 789.5H1761V799H1763V800H1756V799H1758V789.5H1757Q1754 789.5 1754 792H1753Z"/>
<rect x="1782" y="786" width="4" height="4"/><rect x="1794" y="786" width="4" height="4"/><rect x="1782" y="798" width="4" height="4"/><rect x="1794" y="798" width="4" height="4"/>
<rect x="1813" y="793" width="9" height="8"/>
<circle cx="1847" cy="788" r="4.5"/></g>
<rect x="1842.5" y="786" width="9" height="16" rx="4.5" fill="none" stroke="#4a4a4a" stroke-width="1"/>
</svg>
<div class="a" style="left:1564px;top:810px;width:358px;height:1px;background:#474747"></div>
<div class="a" style="left:1569px;top:818px;width:160px;height:23px;background:#535353;border:1px solid #4a4a4a;border-radius:3px"></div>
<div class="t" style="left:1579px;top:823px;font-size:12px;color:#8e8e8e">Normal</div>
<svg style="left:1715px;top:828px" width="9" height="5"><path d="M1 1L4.5 4L8 1" fill="none" stroke="#6e6e6e" stroke-width="1"/></svg>
<div class="t" style="left:1738px;top:824px;font-size:12px;color:#8e8e8e">Opacity:</div>
<div class="a" style="left:1790px;top:819px;width:62px;height:20px;border:1px solid #4a4a4a;border-radius:2px"></div>
<div class="a" style="left:1791px;top:820px;width:42px;height:18px;background:#4a4a4a"></div>
<div class="t" style="left:1793px;top:823px;font-size:12px;color:#7a7a7a">100%</div>
<svg style="left:1838px;top:828px" width="9" height="5"><path d="M1 1L4.5 4L8 1" fill="none" stroke="#6e6e6e" stroke-width="1"/></svg>
<div class="a" style="left:1564px;top:845px;width:358px;height:1px;background:#474747"></div>
<div class="t" style="left:1572px;top:858px;font-size:12px;color:#8e8e8e">Lock:</div>
<svg style="left:0;top:0" width="1922" height="1062"><g fill="#8e8e8e">
<rect x="1613" y="857" width="14" height="14" fill="none" stroke="#8e8e8e" stroke-width="1"/>
<rect x="1614" y="858" width="4" height="4"/><rect x="1622" y="858" width="4" height="4"/><rect x="1618" y="862" width="4" height="4"/><rect x="1614" y="866" width="4" height="4"/><rect x="1622" y="866" width="4" height="4"/>
<path d="M1655 856L1647 866L1649 868L1656 857Z"/><path d="M1646 866Q1649 868 1647 871Q1644 873 1641 873Q1644 870 1643 868Q1644 866 1646 866Z"/>
<path d="M1722 863H1736V873H1722Z"/>
</g><g fill="none" stroke="#8e8e8e" stroke-width="1.3">
<path d="M1674 856V872M1666 864H1682M1671 859L1674 856L1677 859M1671 869L1674 872L1677 869M1669 861L1666 864L1669 867M1679 861L1682 864L1679 867"/>
<path d="M1694 859H1706V870H1694ZM1692 856L1695 859M1705 870L1708 873M1697 856V859"/>
<path d="M1725 863V860Q1725 856 1729 856Q1733 856 1733 860V863"/>
</g></svg>
<div class="t" style="left:1765px;top:858px;font-size:12px;color:#8e8e8e">Fill:</div>
<div class="a" style="left:1790px;top:854px;width:62px;height:20px;border:1px solid #4a4a4a;border-radius:2px"></div>
<div class="a" style="left:1791px;top:855px;width:42px;height:18px;background:#4a4a4a"></div>
<div class="t" style="left:1793px;top:858px;font-size:12px;color:#7a7a7a">100%</div>
<svg style="left:1838px;top:863px" width="9" height="5"><path d="M1 1L4.5 4L8 1" fill="none" stroke="#6e6e6e" stroke-width="1"/></svg>
<div class="a" style="left:1564px;top:923px;width:358px;height:96px;background:#4c4c4c"></div>
<div class="a" style="left:1602px;top:884px;width:298px;height:39px;background:#6c6c6c"></div>
<div class="a" style="left:1564px;top:923px;width:336px;height:1px;background:#444"></div>
<svg style="left:1573px;top:898px" width="19" height="12"><path d="M1 6Q9.5 -2 18 6Q9.5 14 1 6Z" fill="#e8e8e8"/><circle cx="9.5" cy="6" r="3" fill="#4c4c4c"/><circle cx="9.5" cy="6" r="1.5" fill="#e8e8e8"/></svg>
<div class="a" style="left:1606px;top:889px;width:40px;height:29px;background:#fff;border:1px solid #222"></div>
<div class="t" style="left:1659px;top:898px;font-size:13px;font-style:italic;color:#f0f0f0">Background</div>
<svg style="left:1866px;top:895px" width="14" height="17"><path d="M3.5 7V4.5Q3.5 1 7 1Q10.5 1 10.5 4.5V7" fill="none" stroke="#e0e0e0" stroke-width="1.4"/><rect x="1" y="7" width="12" height="9" fill="none" stroke="#e0e0e0" stroke-width="1.4"/><circle cx="7" cy="11.5" r="1.3" fill="#e0e0e0"/></svg>
<div class="a" style="left:1900px;top:884px;width:20px;height:135px;background:#4e4e4e"></div>
<div class="a" style="left:1564px;top:1019px;width:358px;height:32px;background:#535353;border-top:1px solid #444"></div>
<svg style="left:0;top:0" width="1922" height="1062"><g fill="none" stroke="#8e8e8e" stroke-width="1.5">
<path d="M1672 1031.5H1669.5A4.2 4.2 0 0 0 1669.5 1039.5H1672M1678 1031.5H1680.5A4.2 4.2 0 0 1 1680.5 1039.5H1678M1670.5 1035.5H1679.5" stroke-width="1.7"/>
<path d="M1803 1030H1809L1810 1032H1818V1041H1803Z" fill="#e0e0e0" stroke="none"/>
<rect x="1836" y="1028" width="14" height="14" stroke="#e0e0e0"/><path d="M1843 1031V1039M1839 1035H1847" stroke="#e0e0e0"/>
<path d="M1871 1031H1884M1875 1031V1029H1880V1031M1872.5 1031L1873.5 1043H1881.5L1882.5 1031M1876 1034V1041M1879 1034V1041" stroke="#9a9a9a"/>
</g>
<text x="1701" y="1041" font-family="Liberation Serif" font-style="italic" font-size="16" fill="#8e8e8e">fx</text>
<rect x="1734" y="1029" width="17" height="13" rx="1" fill="#e0e0e0"/><circle cx="1742.5" cy="1035.5" r="4" fill="#535353"/>
<circle cx="1777" cy="1035" r="7" fill="none" stroke="#e0e0e0" stroke-width="1.5"/><path d="M1782 1030L1772 1040A7 7 0 0 0 1782 1030Z" fill="#e0e0e0"/><path d="M1783 1043H1787L1785 1045Z" fill="#e0e0e0"/>
</svg>



<div class="a" style="left:1920px;top:10px;width:2px;height:1041px;background:#2a2a2a"></div>
</body></html>
